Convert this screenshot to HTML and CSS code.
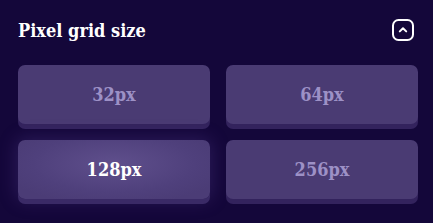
FILE: index.html
```html
<!DOCTYPE html>
<html>
<head>
<meta charset="utf-8">
<link rel="stylesheet" href="styles.css">
</head>
<body>
<div class="panel">
  <div class="header">
    <h2 class="title">Pixel grid size</h2>
    <button class="collapse" aria-label="Collapse">
      <svg width="22" height="22" viewBox="0 0 22 22">
        <rect x="1" y="1" width="20" height="20" rx="5.5" fill="none" stroke="#fff" stroke-width="2"/>
        <path d="M7.8 12.4 L11 9.3 L14.2 12.4" fill="none" stroke="#fff" stroke-width="2" stroke-linecap="round" stroke-linejoin="round"/>
      </svg>
    </button>
  </div>
  <div class="grid">
    <button class="opt">32px</button>
    <button class="opt">64px</button>
    <button class="opt active">128px</button>
    <button class="opt">256px</button>
  </div>
</div>
</body>
</html>
```
FILE: styles.css
```css
html, body {
  margin: 0;
  padding: 0;
  background: #14073a;
  width: 433px;
  height: 223px;
  overflow: hidden;
}
.panel {
  padding: 19px 15px 0 18px;
  font-family: "DejaVu Serif", "Liberation Serif", serif;
  font-stretch: condensed;
}
.header {
  display: flex;
  align-items: center;
  justify-content: space-between;
  height: 22px;
  padding-right: 4px;
}
.title {
  margin: 0;
  color: #fff;
  font-size: 18px;
  font-weight: 700;
  font-stretch: condensed;
}
.collapse {
  background: none;
  border: 0;
  padding: 0;
  width: 22px;
  height: 22px;
  display: block;
}
.collapse svg { display: block; }
.grid {
  margin-top: 24px;
  display: grid;
  grid-template-columns: 192px 192px;
  column-gap: 16px;
  row-gap: 11px;
}
.opt {
  height: 59px;
  margin-bottom: 5px;
  border: 0;
  border-radius: 7px;
  background: #4a3b73;
  box-shadow: 0 5px 0 #33235d;
  color: #9d91c6;
  font-family: "DejaVu Serif", "Liberation Serif", serif;
  font-stretch: condensed;
  font-size: 18px;
  font-weight: 700;
  padding: 0;
}
.opt.active {
  color: #fff;
  background: radial-gradient(ellipse 60% 70% at 50% 40%, #5f4f8c 0%, #4f407c 70%, #4b3c76 100%);
  box-shadow: 0 5px 0 #3a2a66, 0 0 18px 2px rgba(110, 80, 180, 0.25);
}
```
